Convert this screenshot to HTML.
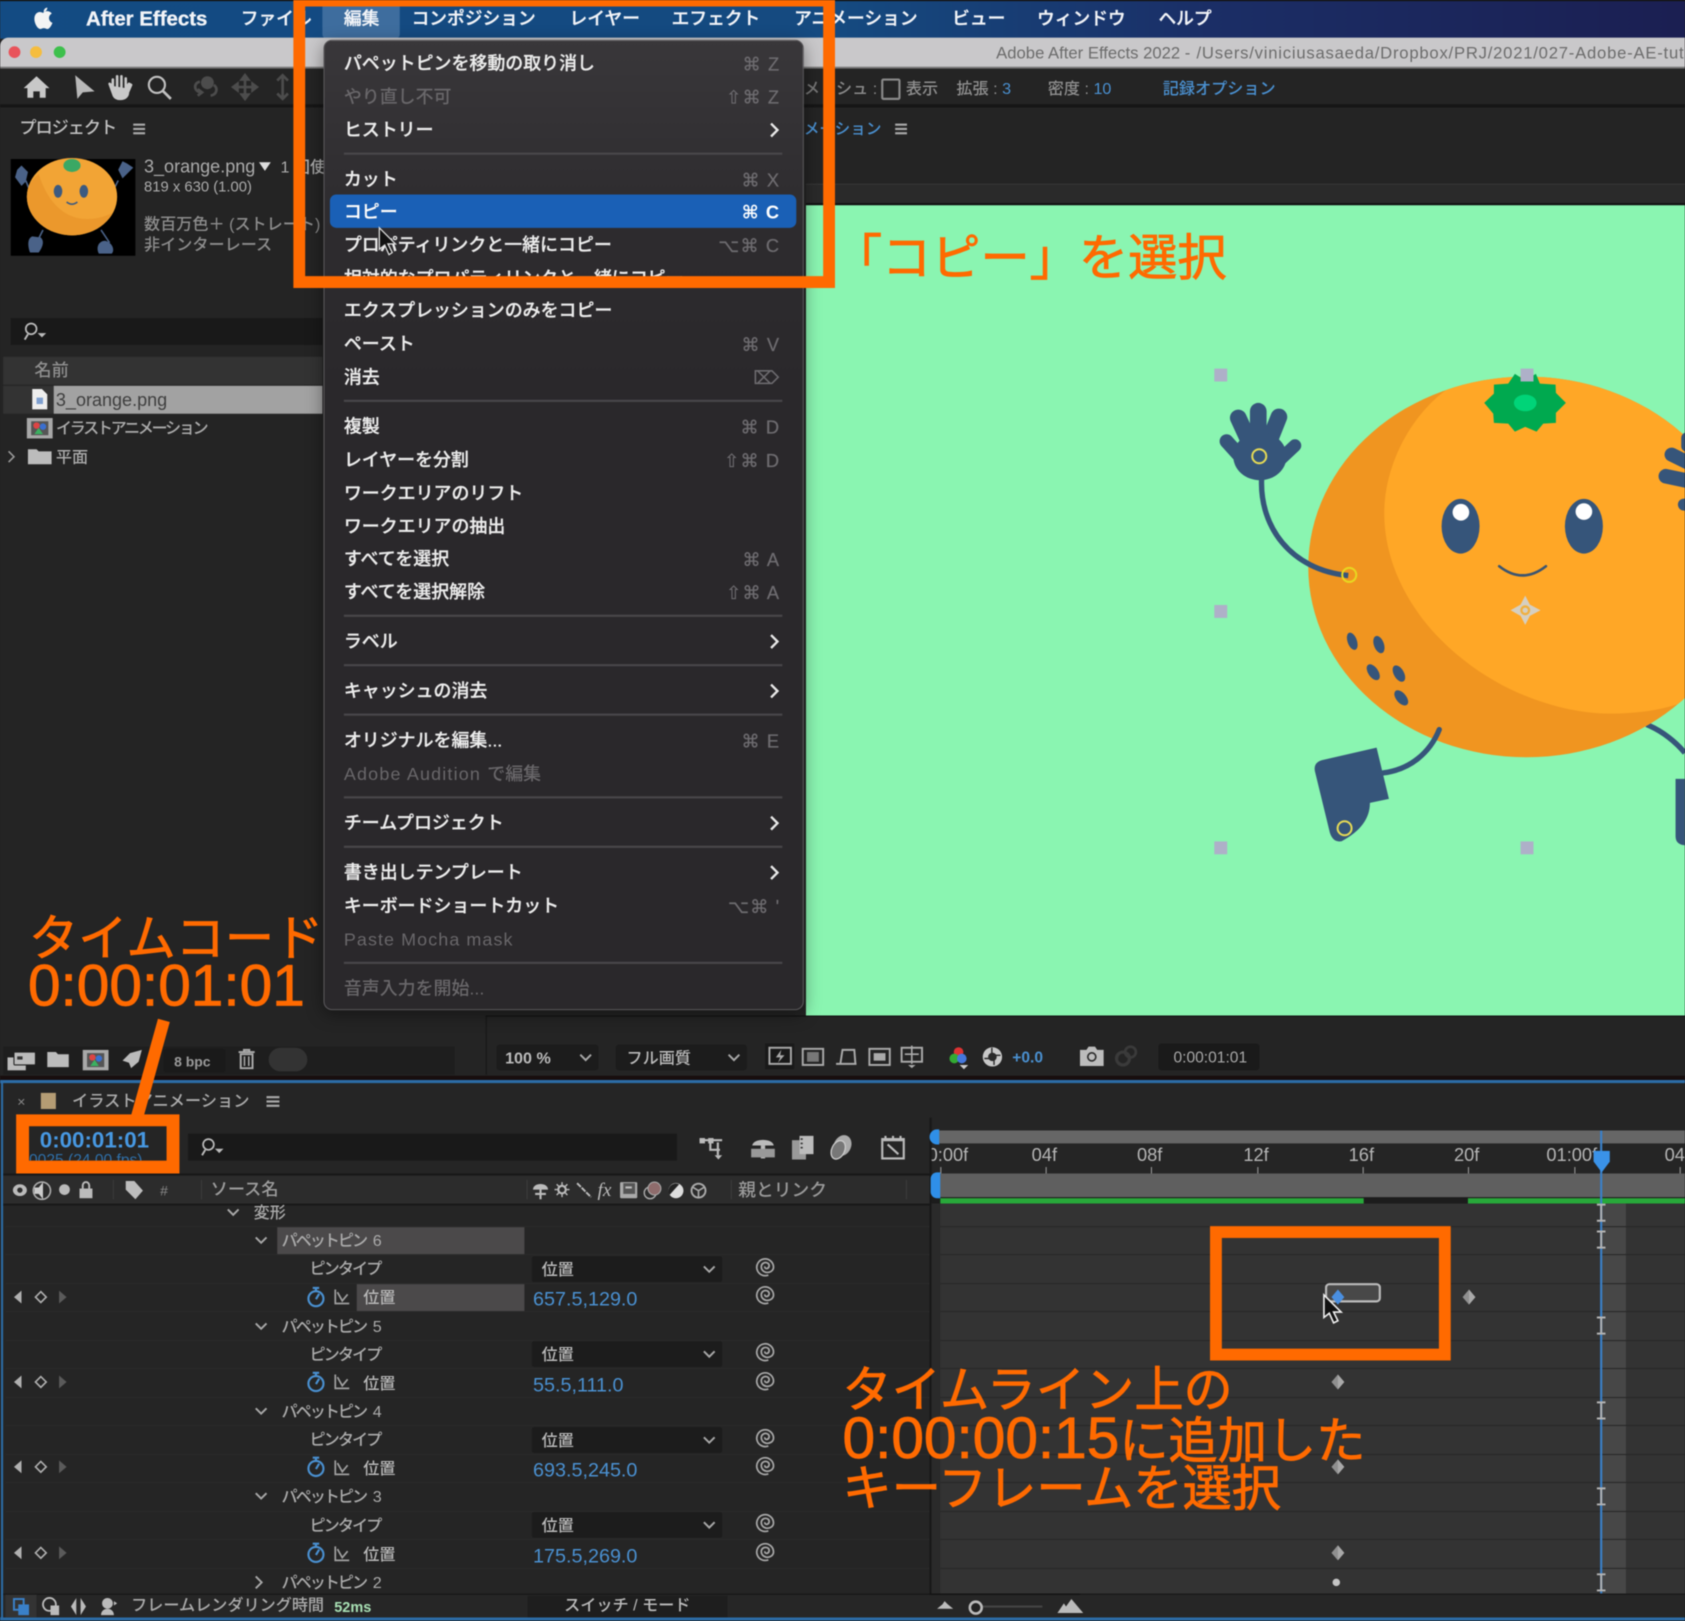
<!DOCTYPE html>
<html lang="ja"><head><meta charset="utf-8"><title>After Effects</title>
<style>
html,body{margin:0;padding:0;width:1685px;height:1620px;overflow:hidden;background:#222}
#w{position:absolute;left:0;top:0;width:1568px;height:1508px;overflow:hidden;transform:scale(1.07462);transform-origin:0 0;background:#242424;font-family:"Liberation Sans","Noto Sans CJK JP","DejaVu Sans",sans-serif;color:#b5b5b5;filter:blur(.4px)}
.b{position:absolute}
.t{position:absolute;white-space:nowrap;line-height:1;transform:translateY(calc(-50% + 2px))}
svg{position:absolute;overflow:visible}
.mb{color:#f2f4f8;font-size:16.5px;font-weight:500;-webkit-text-stroke:.3px #f2f4f8}
.m{left:18px;color:#ececec;font-size:16.7px;font-weight:500;-webkit-text-stroke:.25px #ececec}
.d{color:#69676a;-webkit-text-stroke:0}
.s{right:21px;color:#6e6c70;font-size:17px;letter-spacing:1px;font-family:"Liberation Sans","DejaVu Sans",sans-serif;-webkit-text-stroke:.2px #6e6c70}
.sep{position:absolute;left:18px;width:408px;height:2px;background:#49474a}
.ch{position:absolute;left:414px;width:9px;height:14px}
.l{font-size:15px;color:#ababab;font-weight:500}
.pp{letter-spacing:-1.9px;word-spacing:4px}
.pt{letter-spacing:-1.8px}
.v{font-size:18.4px;color:#4a90d0;font-weight:500;left:496px}
.sel{position:absolute;left:495px;width:177px;height:24px;background:#1c1c1c;border-radius:2px}
.o{color:#ff6a00;font-size:45.8px;line-height:1;-webkit-text-stroke:.8px #ff6a00;transform:translateY(calc(-50% + 1px))}
.n{font-size:54.5px;letter-spacing:0}
.tk{position:absolute;top:1086px;width:1px;height:7px;background:#999}
.tl{font-size:17px;color:#b5b5b5;top:1074px}
.row{position:absolute;left:875px;width:693px;height:1px;background:#282828}
.lrow{position:absolute;left:5px;width:860px;height:1px;background:#2b2b2b}
.h{position:absolute;width:12px;height:12px;background:#aeb0c8}
</style></head><body>
<div id="w">
<svg width="0" height="0" style="position:absolute"><defs>
<symbol id="chev" viewBox="0 0 12 8"><path d="M1 1.500 6 6.500 11 1.500" fill="none" stroke="#a8a8a8" stroke-width="1.800"/></symbol>
<symbol id="chr" viewBox="0 0 9 14"><path d="M1.500 1 7.500 7 1.500 13" fill="none" stroke="#e8e8e8" stroke-width="2.200"/></symbol>
<symbol id="spi" viewBox="0 0 18 18"><path d="M12 16.500A7.800 7.800 0 1 1 16.800 9C16.800 12.500 13.500 14.500 10 14 7 13.500 5 11 5.500 8 6 5.500 9 4 11.500 5.500 13.500 7 13 10 10.500 10.500 9 10.500 8.500 9.500 9 8.500" fill="none" stroke="#a8a8a8" stroke-width="1.600"/></symbol>
<symbol id="sw" viewBox="0 0 18 20"><circle cx="9" cy="11.500" r="7" fill="none" stroke="#4a90d0" stroke-width="2"/><path d="M9 12 12 7M6 1.500h6M9 2v3" stroke="#4a90d0" stroke-width="2" fill="none"/></symbol>
<symbol id="gr" viewBox="0 0 16 16"><path d="M2 1v13h13M4 3.500l4.500 8 5-6" fill="none" stroke="#a0a0a0" stroke-width="1.600"/></symbol>
<symbol id="nav" viewBox="0 0 54 14"><path d="M9 1 2 7l7 6z" fill="#b0b0b0"/><path d="M27 2 22 7l5 5 5-5z" fill="none" stroke="#b0b0b0" stroke-width="1.500"/><path d="M44 1 51 7l-7 6z" fill="#5a5a5a"/></symbol>
<symbol id="kf" viewBox="0 0 12 14"><path d="M6 0 12 7 6 14 0 7z" fill="#8f8f8f"/><path d="M6 0 12 7 6 14z" fill="#c4c4c4" opacity=".5"/></symbol>
</defs></svg>

<!-- menu bar -->
<div class="b" style="left:0;top:0;width:1568px;height:36px;background:linear-gradient(90deg,#134b83 0,#154a80 50%,#1b2e66 72%,#1b1f52 100%);border-top:1px solid #111;box-sizing:border-box"></div>
<svg style="left:29px;top:5px" width="22" height="24" viewBox="0 0 22 24"><path d="M15 2c-2 .3-3.500 2-3.300 4 2-.1 3.500-2 3.300-4zM11.500 7c-1.200 0-2-.8-3.500-.8C5.500 6.200 3 8.500 3 12.500c0 4.500 3 9.500 5.500 9.500 1.200 0 1.900-.8 3.300-.8s2 .8 3.300.8c2 0 4-3.500 4.700-5.800-2-.8-3.200-2.500-3.200-4.500 0-1.800 1-3.200 2.600-4.100-1-1.400-2.700-2.200-4.300-2.200-1.500 0-2.400.8-3.400.8z" fill="#f4f4f4"/></svg>
<span class="t mb" style="left:80px;top:16px;font-family:'Liberation Sans',sans-serif;font-weight:700;font-size:19px">After Effects</span>
<span class="t mb" style="left:224px;top:16px">ファイル</span>
<div class="b" style="left:300px;top:1px;width:72px;height:35px;background:#3e6d9e;border-radius:0 0 4px 4px"></div>
<span class="t mb" style="left:320px;top:16px">編集</span>
<span class="t mb" style="left:383px;top:16px">コンポジション</span>
<span class="t mb" style="left:530px;top:16px">レイヤー</span>
<span class="t mb" style="left:625px;top:16px">エフェクト</span>
<span class="t mb" style="left:739px;top:16px">アニメーション</span>
<span class="t mb" style="left:886px;top:16px">ビュー</span>
<span class="t mb" style="left:965px;top:16px">ウィンドウ</span>
<span class="t mb" style="left:1078px;top:16px">ヘルプ</span>

<!-- title bar -->
<div class="b" style="left:0;top:35px;width:1568px;height:29px;background:#c9c8ca;border-radius:8px 0 0 0;border-bottom:2px solid #777;box-sizing:border-box"></div>
<div class="b" style="left:8px;top:43px;width:11px;height:11px;border-radius:50%;background:#e8535a"></div>
<div class="b" style="left:28px;top:43px;width:11px;height:11px;border-radius:50%;background:#f5bd3e"></div>
<div class="b" style="left:50px;top:43px;width:11px;height:11px;border-radius:50%;background:#3dc04c"></div>
<span class="t" style="left:927px;top:48px;font-size:15.500px;color:#6c6c6c">Adobe After Effects 2022 <span style="letter-spacing:.72px">- /Users/viniciusasaeda/Dropbox/PRJ/2021/027-Adobe-AE-tutorial</span></span>

<!-- toolbar -->
<div class="b" style="left:0;top:64px;width:1568px;height:33px;background:#242424;border-bottom:3px solid #161616"></div>
<svg style="left:21px;top:70px" width="26" height="22" viewBox="0 0 26 22"><path d="M13 1 25 12h-3.500v9H16v-6h-6v6H4.500v-9H1z" fill="#c8c8c8"/></svg>
<svg style="left:69px;top:69px" width="20" height="24" viewBox="0 0 20 24"><path d="M1 1 19 16l-11 1-5 6z" fill="#b8b8b8"/></svg>
<svg style="left:100px;top:69px" width="24" height="24" viewBox="0 0 24 24"><path d="M5 12V5M9 12V2M13 12V2M17 12V4M5 11 2 9 6 20c1 2 3 3 6 3 5 0 7-3 7-6l3-7-2-1-3 4" fill="#c8c8c8" stroke="#c8c8c8" stroke-width="2.400" stroke-linecap="round" stroke-linejoin="round"/></svg>
<svg style="left:136px;top:69px" width="25" height="25" viewBox="0 0 25 25"><circle cx="10" cy="10" r="7.500" fill="none" stroke="#c0c0c0" stroke-width="2"/><path d="M15 15 23 23" stroke="#c0c0c0" stroke-width="2.500"/></svg>
<svg style="left:178px;top:68px" width="28" height="26" viewBox="0 0 28 26"><circle cx="15" cy="9" r="6" fill="#4c4c4c"/><path d="M8 8C2 9 2 17 9 18M6 15l4 3-4 3M21 11c4 3 3 9-3 10" fill="none" stroke="#4c4c4c" stroke-width="2.500"/></svg>
<svg style="left:215px;top:68px" width="26" height="26" viewBox="0 0 26 26"><path d="M13 2v22M2 13h22M13 2l-3 4h6zM13 24l-3-4h6zM2 13l4-3v6zM24 13l-4-3v6z" fill="#4c4c4c" stroke="#4c4c4c" stroke-width="2.500"/></svg>
<svg style="left:254px;top:68px" width="18" height="26" viewBox="0 0 18 26"><path d="M9 2v22M4 7l5-5 5 5M4 19l5 5 5-5" fill="none" stroke="#4c4c4c" stroke-width="2.500"/></svg>
<span class="t l" style="left:748px;top:81px;color:#777">メ</span>
<span class="t l" style="left:778px;top:81px;color:#8a8a8a">シュ :</span>
<div class="b" style="left:820px;top:73px;width:14px;height:16px;border:2px solid #8a8a8a;border-radius:2px"></div>
<span class="t l" style="left:843px;top:81px;color:#8f8f8f">表示</span>
<span class="t l" style="left:890px;top:81px;color:#8f8f8f">拡張 : <span style="color:#4a90d0">3</span></span>
<span class="t l" style="left:975px;top:81px;color:#8f8f8f">密度 : <span style="color:#4a90d0">10</span></span>
<span class="t l" style="left:1082px;top:81px;color:#4a90d0">記録オプション</span>

<!-- project panel -->
<span class="t l" style="left:18px;top:118px;font-size:16px;letter-spacing:-1px;color:#c0c0c0">プロジェクト</span>
<div class="b" style="left:124px;top:115px;width:11px;height:2px;background:#aaa;box-shadow:0 4px #aaa,0 8px #aaa"></div>
<div class="b" style="left:10px;top:148px;width:116px;height:90px;background:#000;overflow:hidden"></div>
<svg style="left:10px;top:148px" width="116" height="90" viewBox="0 0 116 90"><path d="M16 12l-6-6-4 4-2 7 6 8 4-4zM108 14l6-6-6-4-4-2-4 8 4 8z" fill="#4a6288"/><path d="M14 20 22 40M100 20 90 40M30 66 24 78M84 66 92 78" stroke="#4a6288" stroke-width="1.500"/><ellipse cx="57" cy="35" rx="42" ry="36" fill="#f2a435"/><path d="M15 35C15 55 36 71 57 71 74 71 88 62 95 50 70 62 40 58 26 14 19 19 15 27 15 35z" fill="#eb982c"/><ellipse cx="57" cy="6" rx="8" ry="6" fill="#3aa864"/><ellipse cx="44" cy="30" rx="4" ry="6" fill="#3c5a80"/><ellipse cx="68" cy="30" rx="4" ry="6" fill="#3c5a80"/><path d="M52 40q5 4 10 0" stroke="#3c5a80" stroke-width="1.500" fill="none"/><path d="M20 72c-5 2-4 10-2 15h8c3-4 6-10 2-14zM88 76c-6 0-9 6-6 12h12c3-3 1-10-6-12z" fill="#4a6288"/></svg>
<span class="t l" style="left:134px;top:154px;font-size:16.800px;font-weight:400">3_orange.png</span>
<svg style="left:241px;top:151px" width="11" height="8" viewBox="0 0 11 8"><path d="M0 0h11L5.500 8z" fill="#ddd"/></svg>
<span class="t l" style="left:261px;top:154px;font-size:15px">1 回使</span>
<span class="t l" style="left:134px;top:172px;font-size:13.800px">819 x 630 (1.00)</span>
<span class="t l" style="left:134px;top:207px;font-size:15px;color:#8d8d8d">数百万色＋ (ストレート)</span>
<span class="t l" style="left:134px;top:226px;font-size:15px;color:#8d8d8d">非インターレース</span>
<div class="b" style="left:10px;top:296px;width:290px;height:25px;background:#191919"></div>
<svg style="left:21px;top:299px" width="24" height="19" viewBox="0 0 24 19"><circle cx="8" cy="7" r="5" fill="none" stroke="#bbb" stroke-width="1.600"/><path d="M5 12 2 17" stroke="#bbb" stroke-width="1.800"/><path d="M14 11h8l-4 4z" fill="#bbb"/></svg>
<div class="b" style="left:3px;top:332px;width:297px;height:26px;background:#333"></div>
<span class="t l" style="left:32px;top:344px;font-size:16px;color:#8f8f8f">名前</span>
<div class="b" style="left:3px;top:359px;width:297px;height:26px;background:#333"></div>
<div class="b" style="left:50px;top:359px;width:250px;height:26px;background:#a2a2a2"></div>
<svg style="left:29px;top:361px" width="16" height="21" viewBox="0 0 16 21"><path d="M1 1h9l5 5v14H1z" fill="#eee"/><rect x="5" y="9" width="6" height="6" fill="#7fa0d0"/></svg>
<span class="t l" style="left:52px;top:371px;font-size:16.800px;color:#3f3f3f;font-weight:400">3_orange.png</span>
<svg style="left:25px;top:389px" width="24" height="19" viewBox="0 0 24 19"><rect width="24" height="19" fill="#a8a8a8"/><rect x="4" y="3" width="16" height="13" fill="#555"/><circle cx="9" cy="7" r="3" fill="#d44"/><circle cx="15" cy="8" r="3" fill="#3a6fd0"/><path d="M7 15 11 9l4 6z" fill="#3bb060"/></svg>
<span class="t l" style="left:52px;top:397px;letter-spacing:-2.200px">イラストアニメーション</span>
<svg style="left:7px;top:419px" width="7" height="12" viewBox="0 0 7 12"><path d="M1 1 6 6 1 11" fill="none" stroke="#999" stroke-width="1.500"/></svg>
<svg style="left:26px;top:416px" width="22" height="16" viewBox="0 0 22 16"><path d="M0 2h8l2 2h12v12H0z" fill="#bcbcbc"/></svg>
<span class="t l" style="left:52px;top:424px">平面</span>

<!-- project bottom bar -->
<div class="b" style="left:3px;top:974px;width:420px;height:26px;background:#1e1e1e"></div>
<svg style="left:6px;top:977px" width="28" height="20" viewBox="0 0 28 20"><rect x="1" y="7" width="17" height="12" fill="#bbb"/><rect x="7" y="2" width="20" height="12" rx="1" fill="#bbb" stroke="#222"/><rect x="10" y="6" width="5" height="3" fill="#333"/></svg>
<svg style="left:44px;top:978px" width="20" height="15" viewBox="0 0 20 15"><path d="M0 1h8l2 2h10v12H0z" fill="#bcbcbc"/></svg>
<svg style="left:77px;top:977px" width="24" height="19" viewBox="0 0 24 19"><rect width="24" height="19" fill="#a8a8a8"/><rect x="4" y="3" width="16" height="13" fill="#555"/><circle cx="9" cy="7" r="3" fill="#d44"/><circle cx="15" cy="8" r="3" fill="#3a6fd0"/><path d="M7 15 11 9l4 6z" fill="#3bb060"/></svg>
<svg style="left:113px;top:977px" width="20" height="18" viewBox="0 0 20 18"><path d="M1 10 8 3l11-3-3 11-7 6-2-5z" fill="#bbb"/></svg>
<div class="b" style="left:152px;top:976px;width:58px;height:22px;background:#1a1a1a;border-radius:3px"></div>
<span class="t" style="left:162px;top:986px;font-size:13px;color:#9a9a9a;font-weight:700">8 bpc</span>
<svg style="left:221px;top:976px" width="17" height="19" viewBox="0 0 17 19"><path d="M1 3h15M6 3V1h5v2M3 5h11v13H3z" fill="none" stroke="#aaa" stroke-width="1.800"/><path d="M6.500 7v9M10.500 7v9" stroke="#aaa" stroke-width="1.400"/></svg>
<div class="b" style="left:250px;top:975px;width:36px;height:22px;border-radius:11px;background:#333"></div>

<!-- comp panel -->
<div class="b" style="left:750px;top:98px;width:818px;height:2px;background:#161616"></div>
<span class="t l" style="left:748px;top:119px;font-size:14.500px;color:#4a90d0">メーション</span>
<div class="b" style="left:833px;top:115px;width:11px;height:2px;background:#aaa;box-shadow:0 4px #aaa,0 8px #aaa"></div>
<div class="b" style="left:750px;top:171px;width:818px;height:1px;background:#3a3a3a"></div>
<div class="b" style="left:750px;top:172px;width:818px;height:17px;background:#2a2a2a;border-bottom:2px solid #111"></div>
<div class="b" style="left:750px;top:191px;width:818px;height:754px;background:#8af5b1"></div>

<!-- character -->
<svg style="left:1098.100px;top:316.400px" width="469.900" height="483.900" viewBox="0 0 1515 1560"><defs><clipPath id="bd"><ellipse cx="1040" cy="682" rx="655" ry="571"/></clipPath></defs>
<path d="M1400 1155C1450 1175 1490 1210 1515 1240" fill="none" stroke="#36557a" stroke-width="16"/>
<ellipse cx="1040" cy="682" rx="655" ry="571" fill="#f09520"/>
<path clip-path="url(#bd)" d="M800 150C690 230 613 380 613 520 613 700 720 860 850 960 1000 1080 1180 1125 1300 1122 1400 1120 1470 1105 1515 1085V0H800z" fill="#ffa726"/>
<polygon points="1005,103 1035,122 1068,103 1080,132 1127,135 1128,160 1158,190 1128,220 1128,250 1090,252 1070,276 1036,262 1005,276 985,252 942,250 940,222 913,190 942,162 942,135 985,132" fill="#00a94f"/>
<ellipse cx="1036" cy="190" rx="34" ry="25" fill="#00d478"/>
<g fill="#36557a" stroke="#36557a" stroke-linecap="round"><path d="M175 235 205 300M235 215V300M297 232 270 300" stroke-width="50"/><path d="M140 305 185 355" stroke-width="42"/><path d="M345 318 295 365" stroke-width="38"/></g>
<ellipse cx="240" cy="350" rx="80" ry="72" fill="#36557a"/>
<path d="M245 420C240 560 330 690 505 708" fill="none" stroke="#36557a" stroke-width="16"/>
<circle cx="238" cy="350" r="21" fill="none" stroke="#e6da55" stroke-width="6"/>
<circle cx="508" cy="706" r="21" fill="none" stroke="#e8d820" stroke-width="6"/>
<ellipse cx="842" cy="560" rx="57" ry="82" fill="#36557a"/><circle cx="843" cy="518" r="25" fill="#fff"/>
<ellipse cx="1212" cy="560" rx="57" ry="82" fill="#36557a"/><circle cx="1212" cy="516" r="25" fill="#fff"/>
<path d="M958 680Q1028 735 1098 680" fill="none" stroke="#3c5570" stroke-width="8" stroke-linecap="round"/>
<g fill="#36557a"><ellipse cx="517" cy="905" rx="14" ry="27" transform="rotate(-20 517 905)"/><ellipse cx="597" cy="915" rx="15" ry="27" transform="rotate(-20 597 915)"/><ellipse cx="580" cy="998" rx="15" ry="27" transform="rotate(-35 580 998)"/><ellipse cx="657" cy="1002" rx="15" ry="27" transform="rotate(-30 657 1002)"/><ellipse cx="664" cy="1075" rx="15" ry="27" transform="rotate(-40 664 1075)"/></g>
<path d="M1036 768 1050 795 1082 812 1050 829 1036 856 1022 829 992 812 1022 795z" fill="#d6cfc0"/><circle cx="1036" cy="812" r="15" fill="#f0b040"/><circle cx="1036" cy="812" r="8" fill="#d6cfc0"/>
<path d="M778 1170C750 1240 690 1290 610 1300" fill="none" stroke="#36557a" stroke-width="16" stroke-linecap="round"/>
<path d="M590 1224 425 1262Q400 1270 405 1295L450 1480Q460 1510 485 1505 570 1460 570 1390L627 1378z" fill="#36557a"/>
<circle cx="494" cy="1466" r="21" fill="none" stroke="#e6da55" stroke-width="6"/>
<path d="M1515 1318H1487V1490Q1487 1515 1515 1517z" fill="#36557a"/>
<g stroke="#36557a" stroke-linecap="round" fill="none"><path d="M1475 345 1530 372" stroke-width="42"/><path d="M1458 410 1530 425" stroke-width="44"/><path d="M1512 495 1530 497" stroke-width="36"/><path d="M1520 295V320" stroke-width="32"/></g>
</svg>
<div class="h" style="left:1130px;top:343px"></div>
<div class="h" style="left:1415px;top:343px"></div>
<div class="h" style="left:1130px;top:563px"></div>
<div class="h" style="left:1130px;top:783px"></div>
<div class="h" style="left:1415px;top:783px"></div>

<!-- comp toolbar -->
<div class="b" style="left:452px;top:945px;width:1116px;height:1px;background:#111"></div>
<div class="b" style="left:452px;top:946px;width:1px;height:54px;background:#171717"></div>
<div class="b" style="left:462px;top:972px;width:95px;height:24px;background:#1c1c1c;border-radius:3px"></div>
<span class="t" style="left:470px;top:983px;font-size:15px;color:#bbb;font-weight:700">100 %</span>
<svg style="left:539px;top:980px" width="12" height="8"><use href="#chev"/></svg>
<div class="b" style="left:573px;top:972px;width:122px;height:24px;background:#1c1c1c;border-radius:3px"></div>
<span class="t l" style="left:583px;top:983px;color:#bbb">フル画質</span>
<svg style="left:677px;top:980px" width="12" height="8"><use href="#chev"/></svg>
<div class="b" style="left:712px;top:971px;width:27px;height:24px;background:#191919"></div>
<svg style="left:715px;top:974px" width="22" height="18" viewBox="0 0 22 18"><rect x="1" y="1" width="20" height="15" fill="none" stroke="#aaa" stroke-width="1.800"/><path d="M12 3 7 10h4l-2 5 6-7h-4z" fill="#aaa"/></svg>
<svg style="left:746px;top:975px" width="21" height="17" viewBox="0 0 21 17"><rect x="1" y="1" width="19" height="15" fill="none" stroke="#aaa" stroke-width="1.800"/><rect x="5" y="4" width="11" height="9" fill="#777"/></svg>
<svg style="left:777px;top:975px" width="21" height="17" viewBox="0 0 21 17"><path d="M5 15 7 2h11l1 13zM1 15h19" fill="none" stroke="#aaa" stroke-width="1.800"/></svg>
<svg style="left:808px;top:975px" width="21" height="17" viewBox="0 0 21 17"><rect x="1" y="1" width="19" height="15" fill="none" stroke="#aaa" stroke-width="1.800"/><rect x="5" y="5" width="11" height="7" fill="#aaa"/></svg>
<svg style="left:838px;top:973px" width="21" height="21" viewBox="0 0 21 21"><rect x="1" y="2" width="19" height="13" fill="none" stroke="#aaa" stroke-width="1.800"/><path d="M10.500 0v17M4 8h13" stroke="#aaa" stroke-width="1.500"/><path d="M7 18h7l-3.500 3z" fill="#aaa"/></svg>
<svg style="left:883px;top:973px" width="20" height="22" viewBox="0 0 20 22"><circle cx="9" cy="6" r="4.500" fill="#d33"/><circle cx="5" cy="12" r="4.500" fill="#3a3"/><circle cx="12" cy="12" r="4.500" fill="#47d"/><path d="M10 18h8l-4 4z" fill="#ccc"/></svg>
<svg style="left:914px;top:974px" width="19" height="19" viewBox="0 0 19 19"><circle cx="9.500" cy="9.500" r="9" fill="#c8c8c8"/><circle cx="9.500" cy="9.500" r="4" fill="#2a2a2a"/><path d="M9 1v6M17 8h-6M11 17v-6M2 11h6" stroke="#2a2a2a" stroke-width="1.300"/></svg>
<span class="t" style="left:942px;top:983px;font-size:14.500px;color:#4a90d0;font-weight:700">+0.0</span>
<svg style="left:1005px;top:974px" width="22" height="18" viewBox="0 0 22 18"><path d="M0 3h6l2-3h6l2 3h6v15H0z" fill="#bcbcbc"/><circle cx="11" cy="9.500" r="4.500" fill="#2a2a2a"/><circle cx="11" cy="9.500" r="3" fill="#bcbcbc"/></svg>
<svg style="left:1037px;top:973px" width="21" height="19" viewBox="0 0 21 19"><circle cx="8" cy="12" r="6" fill="none" stroke="#3a3a3a" stroke-width="3"/><circle cx="15" cy="6" r="5" fill="none" stroke="#3a3a3a" stroke-width="2.500"/></svg>
<div class="b" style="left:1078px;top:971px;width:94px;height:25px;background:#1a1a1a;border-radius:3px"></div>
<span class="t" style="left:1092px;top:983px;font-size:14.500px;color:#a8a8a8">0:00:01:01</span>

<!-- timeline panel -->
<div class="b" style="left:0;top:1001px;width:1568px;height:4px;background:#180e0e"></div>
<div class="b" style="left:0;top:1005px;width:1568px;height:3px;background:#2c6ca6"></div>
<div class="b" style="left:1px;top:1005px;width:2px;height:503px;background:#2c6ca6"></div>
<div class="b" style="left:0;top:1505px;width:1568px;height:3px;background:#2c6ca6"></div>
<div class="b" style="left:3px;top:1008px;width:1565px;height:497px;background:#252525"></div>
<span class="t" style="left:16px;top:1023px;font-size:13px;color:#888">×</span>
<div class="b" style="left:38px;top:1017px;width:14px;height:15px;background:#b49c74"></div>
<span class="t l" style="left:67px;top:1023px;font-size:15.100px">イラストアニメーション</span>
<div class="b" style="left:248px;top:1020px;width:12px;height:2px;background:#aaa;box-shadow:0 4px #aaa,0 8px #aaa"></div>

<span class="t" style="left:37px;top:1060px;font-size:20.800px;color:#4798e2;font-weight:700">0:00:01:01</span>
<div class="b" style="left:27px;top:1072px;width:129px;height:8px;overflow:hidden"><span style="position:absolute;top:0;left:0;font-size:14.500px;line-height:16px;color:#2f6fa8;white-space:nowrap">0025 (24.00 fps)</span></div>
<div class="b" style="left:175px;top:1055px;width:455px;height:25px;background:#191919"></div>
<svg style="left:186px;top:1058px" width="24" height="19" viewBox="0 0 24 19"><circle cx="8" cy="7" r="5" fill="none" stroke="#bbb" stroke-width="1.600"/><path d="M5 12 2 17" stroke="#bbb" stroke-width="1.800"/><path d="M14 11h8l-4 4z" fill="#bbb"/></svg>
<svg style="left:650px;top:1057px" width="26" height="22" viewBox="0 0 26 22"><path d="M1 4h10M11 4h11M11 4v9h9M18 6v12" stroke="#bbb" stroke-width="2" fill="none"/><rect x="1" y="2" width="5" height="5" fill="#bbb"/><rect x="9" y="2" width="5" height="5" fill="#bbb"/><path d="M15 18h7l-3.500 4z" fill="#bbb"/></svg>
<svg style="left:698px;top:1056px" width="24" height="22" viewBox="0 0 24 22"><path d="M2 10C3 3 21 3 22 10z" fill="#bbb"/><rect x="10" y="10" width="4" height="12" fill="#bbb"/><rect x="1" y="13" width="22" height="8" fill="#999"/></svg>
<svg style="left:736px;top:1056px" width="22" height="23" viewBox="0 0 22 23"><rect x="1" y="5" width="13" height="18" fill="#999"/><rect x="8" y="1" width="13" height="17" fill="#bbb"/><path d="M9 4h2M9 8h2M9 12h2" stroke="#333" stroke-width="1.500"/></svg>
<svg style="left:772px;top:1056px" width="22" height="24" viewBox="0 0 22 24"><ellipse cx="12" cy="10" rx="8" ry="10" fill="#aaa" transform="rotate(25 12 10)"/><ellipse cx="8" cy="14" rx="6" ry="9" fill="#777" stroke="#ccc" stroke-width="1.200" transform="rotate(25 8 14)"/></svg>
<svg style="left:819px;top:1056px" width="24" height="24" viewBox="0 0 24 24"><rect x="2" y="4" width="20" height="18" fill="none" stroke="#bbb" stroke-width="2"/><path d="M5 1v4M12 1v4M19 1v4M3 5h18M7 9l10 9" stroke="#bbb" stroke-width="2"/></svg>

<!-- column header -->
<div class="b" style="left:3px;top:1092px;width:862px;height:2px;background:#181818"></div>
<div class="b" style="left:3px;top:1094px;width:862px;height:26px;background:#2c2c2c;border-bottom:2px solid #191919"></div>
<svg style="left:11px;top:1101px" width="15" height="13" viewBox="0 0 15 13"><ellipse cx="7.500" cy="6.500" rx="6.500" ry="5.500" fill="#bbb"/><circle cx="7.500" cy="6.500" r="2.500" fill="#2c2c2c"/></svg>
<svg style="left:30px;top:1099px" width="18" height="18" viewBox="0 0 18 18"><circle cx="9" cy="9" r="8" fill="none" stroke="#aaa" stroke-width="1.500"/><path d="M2 6h4l4-5v16l-4-5H2z" fill="#ccc"/></svg>
<div class="b" style="left:55px;top:1102px;width:10px;height:10px;background:#bbb;border-radius:50%"></div>
<svg style="left:73px;top:1099px" width="14" height="16" viewBox="0 0 14 16"><path d="M4 7V4a3 3 0 0 1 6 0v3" fill="none" stroke="#bbb" stroke-width="1.800"/><rect x="1" y="7" width="12" height="9" fill="#bbb"/></svg>
<svg style="left:116px;top:1098px" width="18" height="19" viewBox="0 0 18 19"><path d="M1 1h8l8 9-7 8-9-9z" fill="#bdbdbd"/></svg>
<span class="t" style="left:149px;top:1106px;font-size:13px;color:#888">#</span>
<span class="t l" style="left:196px;top:1106px;font-size:16px;color:#9d9d9d">ソース名</span>
<div class="b" style="left:105px;top:1098px;width:1px;height:18px;background:#3c3c3c"></div>
<div class="b" style="left:187px;top:1098px;width:1px;height:18px;background:#3c3c3c"></div>
<div class="b" style="left:490px;top:1098px;width:1px;height:18px;background:#3c3c3c"></div>
<div class="b" style="left:680px;top:1098px;width:1px;height:18px;background:#3c3c3c"></div>
<div class="b" style="left:843px;top:1098px;width:1px;height:18px;background:#3c3c3c"></div>
<!-- switch icons -->
<svg style="left:495px;top:1099px" width="168" height="17" viewBox="0 0 168 17"><path d="M1 8C1 1 15 1 15 8zM7 8h2v9H7zM3 11h10v2H3z" fill="#bbb"/><circle cx="28" cy="8" r="3.500" fill="none" stroke="#bbb" stroke-width="2"/><path d="M28 1v3M28 12v3M21 8h3M32 8h3M23 3l2 2M31 11l2 2M33 3l-2 2M25 11l-2 2" stroke="#bbb" stroke-width="1.300"/><path d="M42 2 55 15" stroke="#bbb" stroke-width="1.800" stroke-dasharray="5 1"/><text x="61" y="14" font-size="18" font-style="italic" fill="#bbb" font-family="Liberation Serif">fx</text><rect x="82" y="1" width="16" height="15" rx="1" fill="#aaa"/><rect x="85" y="2" width="11" height="10" fill="#555"/><rect x="87" y="5" width="6" height="2" fill="#bbb"/><circle cx="110" cy="11" r="5.500" fill="none" stroke="#aaa" stroke-width="1.300"/><circle cx="114" cy="7" r="6" fill="#8f6c6c" stroke="#aaa"/><circle cx="134" cy="9" r="7" fill="#ddd"/><path d="M128 13a7 7 0 0 1 9-10z" fill="#222"/><circle cx="155" cy="9" r="6.500" fill="none" stroke="#aaa" stroke-width="1.800"/><path d="M150 6l5 3 5-3M155 9v6" stroke="#aaa" stroke-width="1.500" fill="none"/></svg>
<span class="t l" style="left:687px;top:1106px;font-size:16.500px;color:#9a9a9a">親とリンク</span>

<!-- left rows -->
<div class="lrow" style="top:1141px"></div><div class="lrow" style="top:1167px"></div><div class="lrow" style="top:1194px"></div><div class="lrow" style="top:1220px"></div><div class="lrow" style="top:1247px"></div><div class="lrow" style="top:1273px"></div><div class="lrow" style="top:1300px"></div><div class="lrow" style="top:1326px"></div><div class="lrow" style="top:1353px"></div><div class="lrow" style="top:1379px"></div><div class="lrow" style="top:1406px"></div><div class="lrow" style="top:1432px"></div><div class="lrow" style="top:1459px"></div>
<svg style="left:211px;top:1124px" width="12" height="8"><use href="#chev"/></svg>
<span class="t l" style="left:236px;top:1127px">変形</span>

<div class="b" style="left:258px;top:1142px;width:230px;height:25px;background:#4b494a"></div>
<svg style="left:237px;top:1150px" width="12" height="8"><use href="#chev"/></svg>
<span class="t l pp" style="left:262px;top:1153px">パペットピン 6</span>
<span class="t l pt" style="left:288px;top:1179px">ピンタイプ</span>
<div class="sel" style="top:1169px"></div><span class="t l" style="left:504px;top:1180px;color:#bbb">位置</span><svg style="left:654px;top:1177px" width="12" height="8"><use href="#chev"/></svg>
<svg style="left:703px;top:1170px" width="18" height="18"><use href="#spi"/></svg>
<svg style="left:11px;top:1200px" width="54" height="14"><use href="#nav"/></svg>
<svg style="left:285px;top:1197px" width="18" height="20"><use href="#sw"/></svg>
<svg style="left:310px;top:1199px" width="16" height="16"><use href="#gr"/></svg>
<div class="b" style="left:332px;top:1195px;width:156px;height:25px;background:#4b494a"></div>
<span class="t l" style="left:338px;top:1206px;color:#b8b8b8">位置</span>
<span class="t v" style="top:1207px">657.5,129.0</span>
<svg style="left:703px;top:1196px" width="18" height="18"><use href="#spi"/></svg>

<svg style="left:237px;top:1230px" width="12" height="8"><use href="#chev"/></svg>
<span class="t l pp" style="left:262px;top:1233px">パペットピン 5</span>
<span class="t l pt" style="left:288px;top:1259px">ピンタイプ</span>
<div class="sel" style="top:1248px"></div><span class="t l" style="left:504px;top:1259px;color:#bbb">位置</span><svg style="left:654px;top:1256px" width="12" height="8"><use href="#chev"/></svg>
<svg style="left:703px;top:1249px" width="18" height="18"><use href="#spi"/></svg>
<svg style="left:11px;top:1279px" width="54" height="14"><use href="#nav"/></svg>
<svg style="left:285px;top:1276px" width="18" height="20"><use href="#sw"/></svg>
<svg style="left:310px;top:1278px" width="16" height="16"><use href="#gr"/></svg>
<span class="t l" style="left:338px;top:1286px;color:#b8b8b8">位置</span>
<span class="t v" style="top:1287px">55.5,111.0</span>
<svg style="left:703px;top:1276px" width="18" height="18"><use href="#spi"/></svg>

<svg style="left:237px;top:1309px" width="12" height="8"><use href="#chev"/></svg>
<span class="t l pp" style="left:262px;top:1312px">パペットピン 4</span>
<span class="t l pt" style="left:288px;top:1338px">ピンタイプ</span>
<div class="sel" style="top:1328px"></div><span class="t l" style="left:504px;top:1339px;color:#bbb">位置</span><svg style="left:654px;top:1336px" width="12" height="8"><use href="#chev"/></svg>
<svg style="left:703px;top:1329px" width="18" height="18"><use href="#spi"/></svg>
<svg style="left:11px;top:1358px" width="54" height="14"><use href="#nav"/></svg>
<svg style="left:285px;top:1355px" width="18" height="20"><use href="#sw"/></svg>
<svg style="left:310px;top:1358px" width="16" height="16"><use href="#gr"/></svg>
<span class="t l" style="left:338px;top:1365px;color:#b8b8b8">位置</span>
<span class="t v" style="top:1366px">693.5,245.0</span>
<svg style="left:703px;top:1355px" width="18" height="18"><use href="#spi"/></svg>

<svg style="left:237px;top:1388px" width="12" height="8"><use href="#chev"/></svg>
<span class="t l pp" style="left:262px;top:1391px">パペットピン 3</span>
<span class="t l pt" style="left:288px;top:1418px">ピンタイプ</span>
<div class="sel" style="top:1407px"></div><span class="t l" style="left:504px;top:1418px;color:#bbb">位置</span><svg style="left:654px;top:1415px" width="12" height="8"><use href="#chev"/></svg>
<svg style="left:703px;top:1408px" width="18" height="18"><use href="#spi"/></svg>
<svg style="left:11px;top:1438px" width="54" height="14"><use href="#nav"/></svg>
<svg style="left:285px;top:1435px" width="18" height="20"><use href="#sw"/></svg>
<svg style="left:310px;top:1438px" width="16" height="16"><use href="#gr"/></svg>
<span class="t l" style="left:338px;top:1445px;color:#b8b8b8">位置</span>
<span class="t v" style="top:1446px">175.5,269.0</span>
<svg style="left:703px;top:1435px" width="18" height="18"><use href="#spi"/></svg>

<svg style="left:237px;top:1466px" width="8" height="13" viewBox="0 0 8 13"><path d="M1 1 6.500 6.500 1 12" fill="none" stroke="#a8a8a8" stroke-width="1.800"/></svg>
<span class="t l pp" style="left:262px;top:1471px">パペットピン 2</span>

<!-- timeline right -->
<div class="b" style="left:865px;top:1040px;width:2px;height:443px;background:#181818"></div>
<div class="b" style="left:870px;top:1052px;width:698px;height:12px;background:#666"></div>
<div class="b" style="left:865px;top:1051px;width:9px;height:14px;background:#2f8fe8;border-radius:7px 0 0 7px"></div>
<div class="b" style="left:867px;top:1065px;width:34px;height:20px;overflow:hidden"><span class="t tl" style="right:0;top:8px">0:00f</span></div>
<span class="t tl" style="left:960px;top:1073px">04f</span>
<span class="t tl" style="left:1058px;top:1073px">08f</span>
<span class="t tl" style="left:1157px;top:1073px">12f</span>
<span class="t tl" style="left:1255px;top:1073px">16f</span>
<span class="t tl" style="left:1353px;top:1073px">20f</span>
<span class="t tl" style="left:1439px;top:1073px">01:00f</span>
<span class="t tl" style="left:1549px;top:1073px">04</span>
<div class="tk" style="left:875px"></div><div class="tk" style="left:973px"></div><div class="tk" style="left:1071px"></div><div class="tk" style="left:1170px"></div><div class="tk" style="left:1268px"></div><div class="tk" style="left:1366px"></div><div class="tk" style="left:1465px"></div><div class="tk" style="left:1563px"></div>
<div class="b" style="left:867px;top:1094px;width:701px;height:26px;background:#1c1c1c"></div>
<div class="b" style="left:874px;top:1092px;width:694px;height:22px;background:#5f5f5f"></div>
<div class="b" style="left:866px;top:1091px;width:9px;height:24px;background:#2f8fe8;border-radius:6px 0 0 6px"></div>
<div class="b" style="left:875px;top:1115px;width:394px;height:5px;background:#28a83a"></div>
<div class="b" style="left:1366px;top:1115px;width:202px;height:5px;background:#28a83a"></div>
<div class="b" style="left:867px;top:1120px;width:701px;height:363px;background:#333"></div>
<div class="b" style="left:867px;top:1120px;width:8px;height:363px;background:#2a2a2a"></div>
<div class="b" style="left:1490px;top:1120px;width:23px;height:363px;background:#474747"></div>
<div class="row" style="top:1141px"></div><div class="row" style="top:1167px"></div><div class="row" style="top:1194px"></div><div class="row" style="top:1220px"></div><div class="row" style="top:1247px"></div><div class="row" style="top:1273px"></div><div class="row" style="top:1300px"></div><div class="row" style="top:1326px"></div><div class="row" style="top:1353px"></div><div class="row" style="top:1379px"></div><div class="row" style="top:1406px"></div><div class="row" style="top:1432px"></div><div class="row" style="top:1459px"></div>
<div class="b" style="left:1489px;top:1052px;width:2px;height:431px;background:#3a80c8"></div>
<svg style="left:1482px;top:1071px" width="17" height="20" viewBox="0 0 17 20"><path d="M1 0h15v10l-7.500 10L1 10z" fill="#3a92e8"/></svg>
<svg style="left:1484px;top:1120px" width="12" height="365" viewBox="0 0 12 365"><g fill="none" stroke="#b4b4b4" stroke-width="1.800"><path d="M2 1h8M6 1v15M2 16h8"/><path d="M2 26h8M6 26v15M2 41h8"/><path d="M2 106h8M6 106v15M2 121h8"/><path d="M2 185h8M6 185v15M2 200h8"/><path d="M2 265h8M6 265v15M2 280h8"/><path d="M2 345h8M6 345v15M2 360h8"/></g></svg>
<svg style="left:1361px;top:1200px" width="12" height="14"><use href="#kf"/></svg>
<svg style="left:1239px;top:1279px" width="12" height="14"><use href="#kf"/></svg>
<svg style="left:1239px;top:1358px" width="12" height="14"><use href="#kf"/></svg>
<svg style="left:1239px;top:1438px" width="12" height="14"><use href="#kf"/></svg>
<div class="b" style="left:1240px;top:1469px;width:7px;height:7px;border-radius:50%;background:#c4c4c4"></div>
<div class="b" style="left:1233px;top:1194px;width:48px;height:14px;background:#484848;border:2px solid #bbb;border-radius:4px"></div>
<svg style="left:1239px;top:1200px" width="12" height="14" viewBox="0 0 12 14"><path d="M6 0 12 7 6 14 0 7z" fill="#4a8fe0"/></svg>
<svg style="left:1231px;top:1204px" width="19" height="29" viewBox="0 0 19 29"><path d="M1 1v21l5-4 4 9 4-2-4-8h7z" fill="#111" stroke="#eee" stroke-width="1.500"/></svg>

<!-- timeline bottom -->
<div class="b" style="left:3px;top:1483px;width:1565px;height:22px;background:#262626;border-top:1px solid #161616;box-sizing:border-box"></div>
<div class="b" style="left:5px;top:1484px;width:29px;height:21px;background:#333"></div>
<svg style="left:12px;top:1487px" width="16" height="17" viewBox="0 0 16 17"><rect x="1" y="1" width="9" height="10" fill="none" stroke="#3a80c8" stroke-width="1.800"/><rect x="5" y="6" width="10" height="10" fill="#3a80c8"/></svg>
<svg style="left:39px;top:1486px" width="17" height="18" viewBox="0 0 17 18"><circle cx="7" cy="7" r="6" fill="none" stroke="#bbb" stroke-width="1.700"/><rect x="8" y="8" width="8" height="9" fill="#bbb"/></svg>
<svg style="left:65px;top:1486px" width="16" height="18" viewBox="0 0 16 18"><path d="M6 1 1 9l5 8zM10 1l5 8-5 8z" fill="#bbb"/></svg>
<svg style="left:91px;top:1486px" width="18" height="17" viewBox="0 0 18 17"><circle cx="9" cy="6" r="5" fill="#bbb"/><path d="M3 17c0-8 12-8 12 0zM15 4l3 2-3 2z" fill="#bbb"/></svg>
<span class="t l" style="left:122px;top:1492px;font-size:15px">フレームレンダリング時間</span>
<span class="t" style="left:311px;top:1494px;font-size:13.500px;color:#a8e0b4;font-weight:700">52ms</span>
<div class="b" style="left:491px;top:1485px;width:186px;height:20px;background:#1e1e1e"></div>
<span class="t l" style="left:525px;top:1492px;color:#bbb">スイッチ / モード</span>
<div class="b" style="left:865px;top:1483px;width:140px;height:1px;background:#111"></div>
<svg style="left:872px;top:1489px" width="15" height="10" viewBox="0 0 15 10"><path d="M0 8 5 4l2-3 3 3 5 4z" fill="#bbb"/></svg>
<svg style="left:900px;top:1489px" width="72" height="15" viewBox="0 0 72 15"><path d="M14 6h56" stroke="#444" stroke-width="2"/><circle cx="8" cy="7" r="5.500" fill="#222" stroke="#bbb" stroke-width="2.400"/></svg>
<svg style="left:984px;top:1488px" width="25" height="13" viewBox="0 0 25 13"><path d="M0 13 6 4l2 3 5-7 11 13z" fill="#bbb"/></svg>

<!-- edit menu -->
<div class="b" style="left:301px;top:37px;width:447px;height:903px;box-sizing:border-box;background:linear-gradient(180deg,#39373a 0,#2e2c2f 160px,#2a282b 340px);border:1px solid #59575a;border-radius:8px;box-shadow:0 4px 16px rgba(0,0,0,.4)">
<div class="b" style="left:5px;top:143px;width:434px;height:31px;background:#1a60b6;border-radius:6px"></div>
<span class="t m" style="top:20px">パペットピンを移動の取り消し</span><span class="t s" style="top:20px">⌘ Z</span>
<span class="t m d" style="top:51px">やり直し不可</span><span class="t s" style="top:51px">⇧⌘ Z</span>
<span class="t m" style="top:82px">ヒストリー</span><svg class="ch" style="top:76px"><use href="#chr"/></svg>
<div class="sep" style="top:104px"></div>
<span class="t m" style="top:128px">カット</span><span class="t s" style="top:128px">⌘ X</span>
<span class="t m" style="top:158px;color:#fff">コピー</span><span class="t s" style="top:158px;color:#fff;font-weight:700;-webkit-text-stroke:0">⌘ C</span>
<span class="t m" style="top:189px">プロパティリンクと一緒にコピー</span><span class="t s" style="top:189px">⌥⌘ C</span>
<span class="t m" style="top:220px">相対的なプロパティリンクと一緒にコピー</span>
<span class="t m" style="top:250px">エクスプレッションのみをコピー</span>
<span class="t m" style="top:281px">ペースト</span><span class="t s" style="top:281px">⌘ V</span>
<span class="t m" style="top:312px">消去</span><span class="t s" style="top:312px">⌦</span>
<div class="sep" style="top:334px"></div>
<span class="t m" style="top:358px">複製</span><span class="t s" style="top:358px">⌘ D</span>
<span class="t m" style="top:389px">レイヤーを分割</span><span class="t s" style="top:389px">⇧⌘ D</span>
<span class="t m" style="top:420px">ワークエリアのリフト</span>
<span class="t m" style="top:451px">ワークエリアの抽出</span>
<span class="t m" style="top:481px">すべてを選択</span><span class="t s" style="top:481px">⌘ A</span>
<span class="t m" style="top:512px">すべてを選択解除</span><span class="t s" style="top:512px">⇧⌘ A</span>
<div class="sep" style="top:534px"></div>
<span class="t m" style="top:558px">ラベル</span><svg class="ch" style="top:552px"><use href="#chr"/></svg>
<div class="sep" style="top:580px"></div>
<span class="t m" style="top:604px">キャッシュの消去</span><svg class="ch" style="top:598px"><use href="#chr"/></svg>
<div class="sep" style="top:626px"></div>
<span class="t m" style="top:650px">オリジナルを編集...</span><span class="t s" style="top:650px">⌘ E</span>
<span class="t m d" style="top:681px"><span style="letter-spacing:1.100px">Adobe Audition </span>で編集</span>
<div class="sep" style="top:703px"></div>
<span class="t m" style="top:727px">チームプロジェクト</span><svg class="ch" style="top:721px"><use href="#chr"/></svg>
<div class="sep" style="top:749px"></div>
<span class="t m" style="top:773px">書き出しテンプレート</span><svg class="ch" style="top:767px"><use href="#chr"/></svg>
<span class="t m" style="top:804px">キーボードショートカット</span><span class="t s" style="top:804px">⌥⌘ '</span>
<span class="t m d" style="top:835px;letter-spacing:1px">Paste Mocha mask</span>
<div class="sep" style="top:857px"></div>
<span class="t m d" style="top:881px">音声入力を開始...</span>
</div>
<svg style="left:352px;top:211px" width="19" height="27" viewBox="0 0 19 27"><path d="M1 1v20l5-4 4 9 3-2-4-8h7z" fill="#111" stroke="#ddd" stroke-width="1.200"/></svg>

<!-- annotations -->
<div class="b" style="left:273px;top:-6px;width:504px;height:274px;box-sizing:border-box;border:11px solid #ff6a00;border-top-width:12px"></div>
<span class="t o" style="left:775px;top:240px">「コピー」を選択</span>
<span class="t o" style="left:27px;top:873px">タイムコード</span>
<span class="t o n" style="left:26px;top:917px">0:00:01:01</span>
<svg style="left:110px;top:945px" width="50" height="100" viewBox="0 0 50 100"><path d="M37 3 48 6 22 100H10z" fill="#ff6a00"/></svg>
<div class="b" style="left:15px;top:1037px;width:152px;height:55px;box-sizing:border-box;border:12px solid #ff6a00;border-top-width:11px"></div>
<div class="b" style="left:1126px;top:1141px;width:224px;height:125px;box-sizing:border-box;border:11px solid #ff6a00"></div>
<span class="t o" style="left:784px;top:1293px">タイムライン上の</span>
<span class="t o" style="left:784px;top:1338px"><span class="n">0:00:00:15</span>に追加した</span>
<span class="t o" style="left:784px;top:1385px">キーフレームを選択</span>
</div>
</body></html>
